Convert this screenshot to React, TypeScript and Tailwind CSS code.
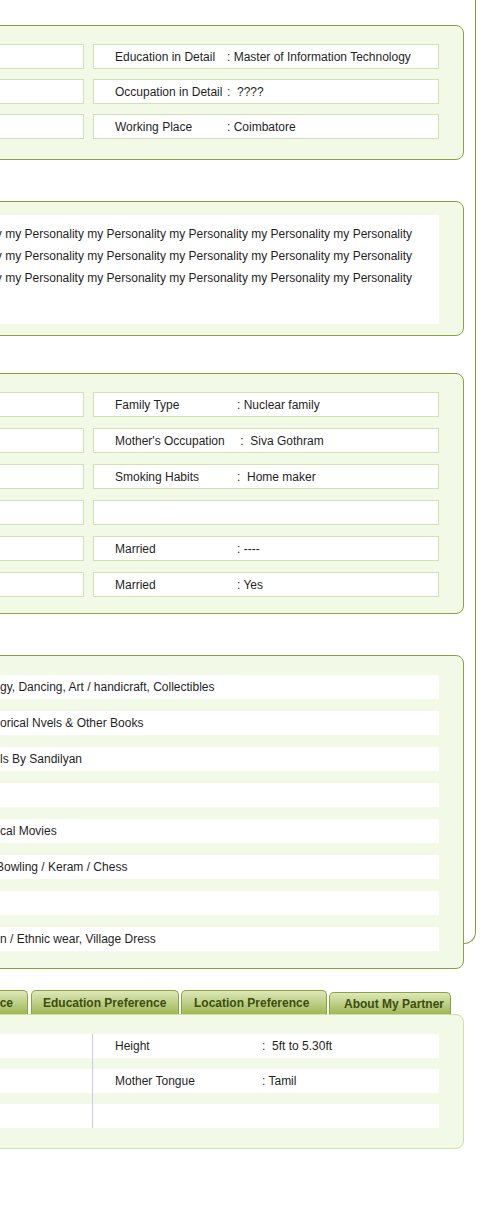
import React from "react";

const cell = "h-[25px] bg-white border border-[#d0e1b3] flex items-center pl-[21px] whitespace-pre";
const panel = "ml-[12px] mr-[11px] border border-[#8d9f3f] bg-[#f2f9e7] rounded-[8px] px-[24px]";

function Pair({ label, value, w }: { label: string; value: string; w: string }) {
  return (
    <div className={cell}>
      {label !== "" && (
        <>
          <span className={`inline-block ${w}`}>{label}</span>
          <span>{value}</span>
        </>
      )}
    </div>
  );
}

const personality =
  "my Personality my Personality my Personality my Personality my Personality my Personality my Personality my Personality";

export default function App() {
  const hobbies = [
    "gy, Dancing, Art / handicraft, Collectibles",
    "orical Nvels & Other Books",
    "ls By Sandilyan",
    "",
    "cal Movies",
    "BOWLING",
    "",
    "n / Ethnic wear, Village Dress",
  ];
  const family: [string, string][] = [
    ["Family Type", ": Nuclear family"],
    ["Mother's Occupation", " :  Siva Gothram"],
    ["Smoking Habits", ":  Home maker"],
    ["", ""],
    ["Married", ": ----"],
    ["Married", ": Yes"],
  ];
  return (
    <div className="w-[488px] h-[1207px] overflow-hidden bg-white text-[12px] text-[#1f1f1f] font-['Liberation_Sans',Arial,sans-serif]">
      {/* outer frame */}
      <div className="ml-[-524px] w-[1000px] h-[944px] border-r border-b border-[#8a9b3c] rounded-br-[12px] pt-[25px]">
        {/* Education panel */}
        <div className={`${panel} h-[135px] pt-[18px]`}>
          <div className="grid grid-cols-[1fr_346px] gap-x-[9px] gap-y-[10px]">
            <div className={cell} />
            <Pair label="Education in Detail" value=": Master of Information Technology" w="min-w-[112px]" />
            <div className={cell} />
            <Pair label="Occupation in Detail" value=":  ????" w="min-w-[112px]" />
            <div className={cell} />
            <Pair label="Working Place" value=": Coimbatore" w="min-w-[112px]" />
          </div>
        </div>

        {/* Personality panel */}
        <div className={`${panel} mt-[41px] h-[135px] pt-[13px]`}>
          <div className="h-[109px] bg-white pt-[8px] pr-[27px] text-right whitespace-nowrap leading-[22px]">
            <div>{personality}</div>
            <div>{personality}</div>
            <div>{personality}</div>
          </div>
        </div>

        {/* Family panel */}
        <div className={`${panel} mt-[37px] h-[241px] pt-[18px]`}>
          <div className="grid grid-cols-[1fr_346px] gap-x-[9px] gap-y-[11px]">
            {family.map(([l, v], i) => (
              <React.Fragment key={i}>
                <div className={cell} />
                <Pair label={l} value={v} w="min-w-[122px]" />
              </React.Fragment>
            ))}
          </div>
        </div>

        {/* Hobbies panel */}
        <div className={`${panel} mt-[41px] h-[314px] pt-[19px]`}>
          <div className="flex flex-col gap-[12px]">
            {hobbies.map((h, i) => (
              <div key={i} className="h-[24px] bg-white flex items-center whitespace-pre">
                <span className="w-[487px] shrink-0" />
                {h === "BOWLING" ? (
                  <span className="-ml-[4px]">Bowling / Keram / Chess</span>
                ) : (
                  <span>{h}</span>
                )}
              </div>
            ))}
          </div>
        </div>
      </div>

      {/* Partner preference */}
      <div className="ml-[-512px] w-[976px] mt-[46px]">
        <div className="flex items-end justify-end pr-[13px] h-[24px] font-bold text-[#3c4d0e] whitespace-nowrap">
          <div className="w-[140px] h-[24px] rounded-t-[5px] border border-b-0 border-[#8ba243] bg-linear-to-b from-[#dde9b8] to-[#9fb755] flex items-center justify-end pr-[14px]">
            Religion Preference
          </div>
          <div className="ml-[3px] w-[148px] h-[24px] rounded-t-[5px] border border-b-0 border-[#8ba243] bg-linear-to-b from-[#dde9b8] to-[#9fb755] flex items-center pl-[11px]">
            Education Preference
          </div>
          <div className="ml-[2px] w-[146px] h-[24px] rounded-t-[5px] border border-b-0 border-[#8ba243] bg-linear-to-b from-[#dde9b8] to-[#9fb755] flex items-center pl-[12px]">
            Location Preference
          </div>
          <div className="ml-[2px] w-[122px] h-[22px] rounded-t-[5px] border border-b-0 border-[#8ba243] bg-linear-to-b from-[#dde9b8] to-[#9fb755] flex items-center pl-[14px] pt-[1px]">
            About My Partner
          </div>
        </div>
        <div className="border border-[#cde0a6] bg-[#f2f9e7] rounded-[8px] px-[24px] h-[135px] pt-[19px]">
          <div className="flex">
            <div className="flex-1 flex flex-col gap-[11px] border-r border-[#c8c8f0]">
              <div className="h-[24px] bg-white" />
              <div className="h-[24px] bg-white" />
              <div className="h-[24px] bg-white" />
            </div>
            <div className="w-[346px] flex flex-col gap-[11px]">
              <div className="h-[24px] bg-white flex items-center pl-[22px] whitespace-pre">
                <span className="inline-block min-w-[147px]">Height</span>
                <span>:  5ft to 5.30ft</span>
              </div>
              <div className="h-[24px] bg-white flex items-center pl-[22px] whitespace-pre">
                <span className="inline-block min-w-[147px]">Mother Tongue</span>
                <span>: Tamil</span>
              </div>
              <div className="h-[24px] bg-white" />
            </div>
          </div>
        </div>
      </div>
    </div>
  );
}
